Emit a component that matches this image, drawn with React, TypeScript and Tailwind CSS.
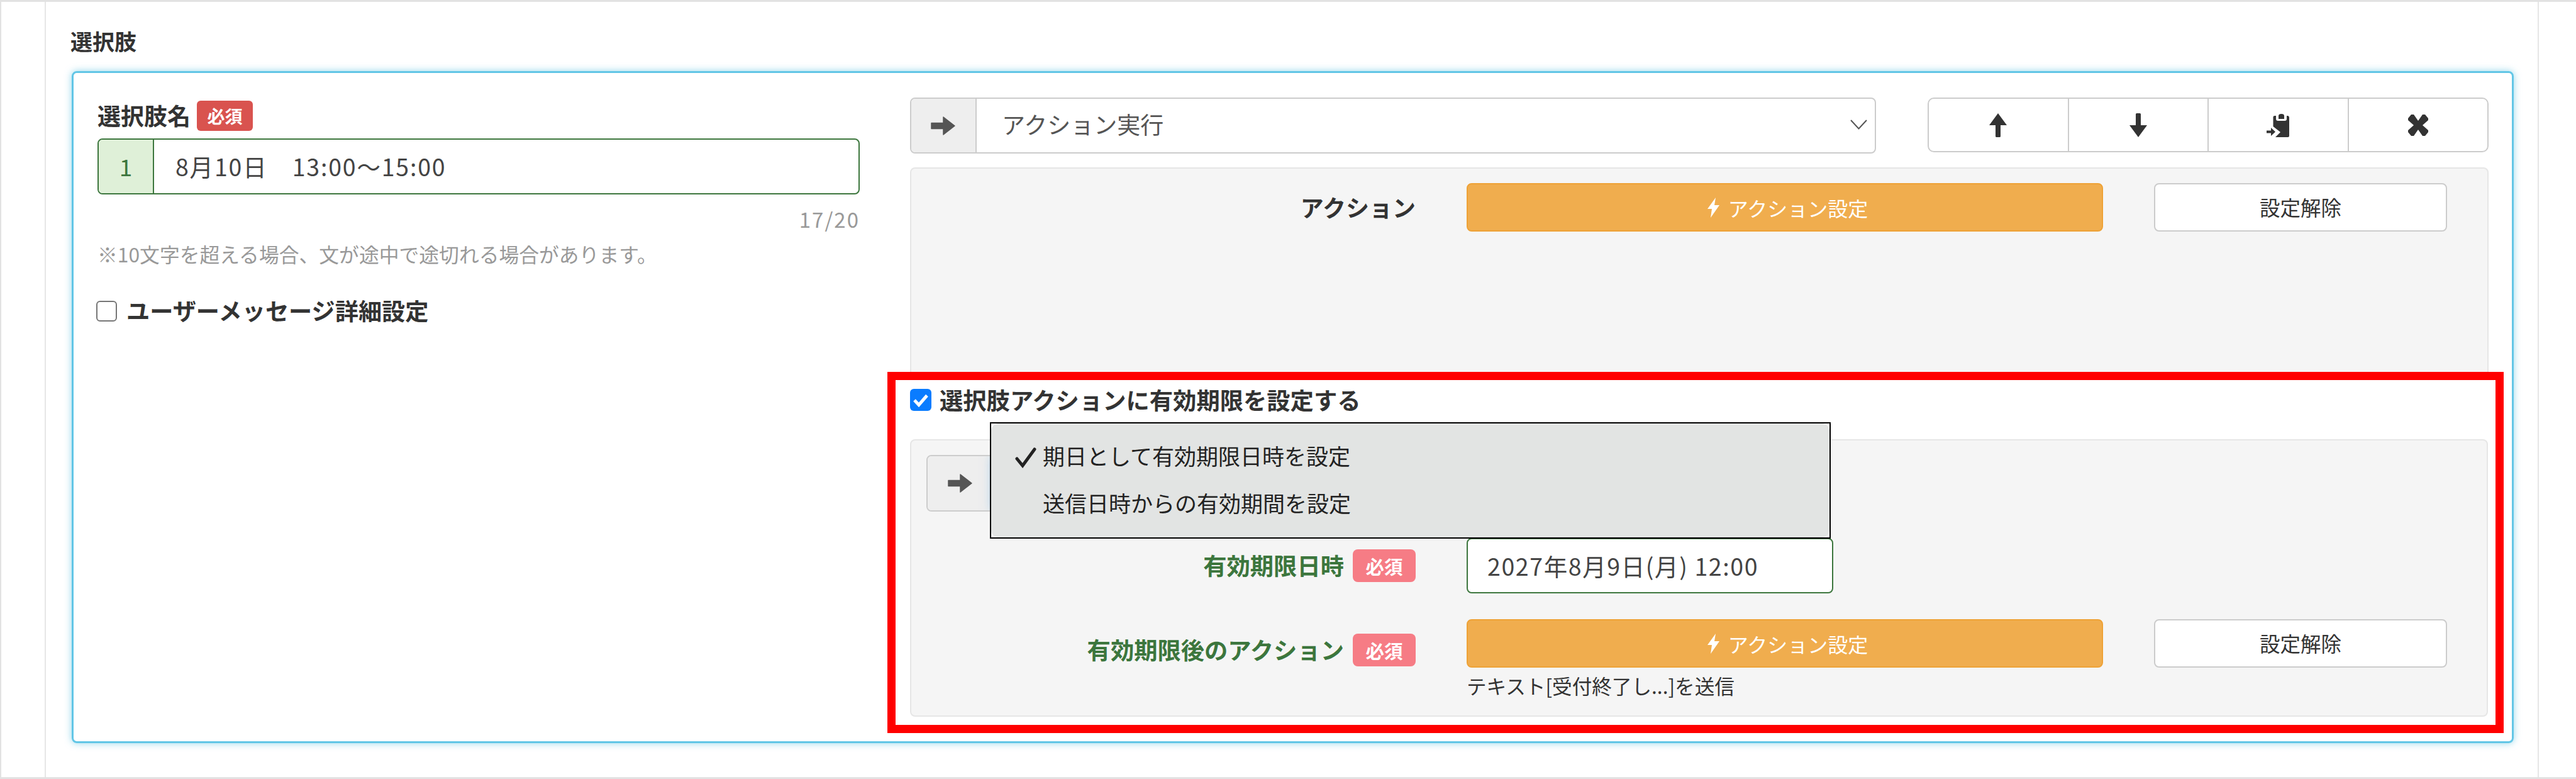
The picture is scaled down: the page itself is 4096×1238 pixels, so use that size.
const FONT = 'font-["Noto_Sans_CJK_JP","Noto_Sans",sans-serif]'

function ArrowRight() {
  return (
    <svg width="40" height="32" viewBox="0 0 40 32" aria-hidden>
      <path d="M1 11.5 H20 V2 L38 16 L20 30 V20.5 H1 Z" fill="#555" stroke="#555" strokeWidth="1.5" strokeLinejoin="round" />
    </svg>
  )
}

function ArrowUp() {
  return (
    <svg width="30" height="38" viewBox="0 0 30 38" aria-hidden>
      <path d="M15 0 L29 19 H19 V36.5 Q19 38 17.5 38 H12.5 Q11 38 11 36.5 V19 H1 Z" fill="#333" />
    </svg>
  )
}

function ArrowDown() {
  return (
    <svg width="30" height="38" viewBox="0 0 30 38" aria-hidden>
      <path d="M15 38 L29 19 H19 V1.5 Q19 0 17.5 0 H12.5 Q11 0 11 1.5 V19 H1 Z" fill="#333" />
    </svg>
  )
}

function PasteIcon() {
  return (
    <svg width="36" height="38" viewBox="0 0 36 38" aria-hidden>
      <path d="M10.5 6 Q10.5 4 13 4 H33 Q36 4 36 7 V36 Q36 38 34 38 H14 L22 30 L10.5 21 Z" fill="#333" />
      <path d="M15 3 H32 V9 Q32 12 29 12 H18 Q15 12 15 9 Z" fill="#fff" />
      <path d="M19 9 V4 Q19 1 23.5 1 Q28 1 28 4 V9 Z" fill="#333" />
      <path d="M0 27.5 H7 V23 L14 29.5 L7 36 V31.5 H0 Z" fill="#333" />
    </svg>
  )
}

function CrossIcon() {
  return (
    <svg width="32" height="34" viewBox="0 0 32 34" aria-hidden>
      <path d="M0 6 L5 0 H9 L16 10 L23 0 H27 L32 6 V9 L23 17 L32 25 V28 L27 34 H23 L16 24 L9 34 H5 L0 28 V25 L9 17 L0 9 Z" fill="#333" />
    </svg>
  )
}

function Bolt() {
  return (
    <svg width="21" height="32" viewBox="0 0 21 32" aria-hidden>
      <path d="M14 0 L1 18 H8 L6 32 L20 12 H12 Z" fill="#fff" />
    </svg>
  )
}

function Chevron() {
  return (
    <svg width="27" height="16" viewBox="0 0 27 16" fill="none" aria-hidden>
      <path d="M1 1 L13.5 14.5 L26 1" stroke="#555" strokeWidth="2" />
    </svg>
  )
}

function Required({ soft }: { soft?: boolean }) {
  return soft ? (
    <span className="flex h-[52px] w-[100px] shrink-0 items-center justify-center rounded-[8px] bg-[#f67c85] text-[29.5px] font-bold text-white">
      必須
    </span>
  ) : (
    <span className="flex h-[48px] w-[89px] shrink-0 items-center justify-center rounded-[6px] bg-[#d9534f] text-[28px] font-bold text-white">
      必須
    </span>
  )
}

function ActionButtons() {
  return (
    <div className="flex gap-[81px]">
      <button className="flex h-[77px] w-[1012px] items-center justify-center gap-[13px] rounded-[8px] border-2 border-[#eea236] bg-[#f0ad4e] pl-[8px] text-[32px] text-white">
        <Bolt />
        アクション設定
      </button>
      <button className="flex h-[77px] w-[466px] items-center justify-center rounded-[8px] border-2 border-[#ccc] bg-white text-[32.5px] text-[#333]">
        設定解除
      </button>
    </div>
  )
}

export default function App() {
  return (
    <div className={`${FONT} flex h-[1238px] w-[4096px] overflow-hidden border-y-[3px] border-l-2 border-[#e2e2e2] bg-white text-[#333]`}>
      <div className="w-[69px] shrink-0" />
      <section className="h-full w-[3966px] shrink-0 border-x-2 border-[#e6e6e6] pl-[41px]">
        <h2 className="-ml-[2px] mt-[38px] h-[48px] text-[35px] font-bold leading-[48px]">選択肢</h2>

        {/* Focused choice card */}
        <div className="mt-[24px] flex h-[1068px] w-[3883px] gap-[80px] rounded-[8px] border-[3px] border-[#62c6e6] pl-[38px] pt-[39px] shadow-[0_0_12px_rgba(91,192,222,0.65)]">
          {/* Left column */}
          <div className="w-[1212px] shrink-0">
            <div className="mt-[5px] flex h-[48px] items-center gap-[10px]">
              <label className="text-[37px] font-bold">選択肢名</label>
              <Required />
            </div>
            <div className="mt-[12px] flex h-[89px] overflow-hidden rounded-[8px] border-2 border-[#3c763d]">
              <span className="flex w-[88px] items-center justify-center border-r-2 border-[#3c763d] bg-[#dff0d8] text-[37px] text-[#3c763d]">
                1
              </span>
              <span className="flex flex-1 items-center whitespace-pre pl-[34px] text-[37.5px] tracking-[1.8px] text-[#444]">8月10日　13:00〜15:00</span>
            </div>
            <div className="mt-[22px] h-[34px] text-right text-[33px] leading-[34px] tracking-[2px] text-[#999]">17/20</div>
            <p className="mt-[20px] h-[36px] text-[31.8px] leading-[36px] text-[#999]">
              ※10文字を超える場合、文が途中で途切れる場合があります。
            </p>
            <label className="-ml-[2px] mt-[56px] flex h-[34px] items-center gap-[15px] text-[37.2px] font-bold">
              <span className="h-[33px] w-[33px] shrink-0 rounded-[6px] border-2 border-[#767676] bg-white" />
              ユーザーメッセージ詳細設定
            </label>
          </div>

          {/* Right column */}
          <div className="relative w-[2510px] shrink-0">
            <div className="flex items-start justify-between">
              <div className="flex h-[89px] w-[1536px] overflow-hidden rounded-[8px] border-2 border-[#ccc]">
                <span className="flex w-[104px] items-center justify-center border-r-2 border-[#ccc] bg-[#eee]">
                  <ArrowRight />
                </span>
                <span className="flex flex-1 items-center justify-between pb-[3px] pl-[40px] pr-[12px] text-[37px] text-[#555]">
                  アクション実行
                  <Chevron />
                </span>
              </div>
              <div className="flex h-[87px] w-[892px] divide-x-2 divide-[#ccc] overflow-hidden rounded-[10px] border-2 border-[#ccc]">
                <button className="flex flex-1 items-center justify-center"><ArrowUp /></button>
                <button className="flex flex-1 items-center justify-center"><ArrowDown /></button>
                <button className="flex flex-1 items-center justify-center"><PasteIcon /></button>
                <button className="flex flex-1 items-center justify-center"><CrossIcon /></button>
              </div>
            </div>

            <div className="mt-[22px] flex h-[338px] items-start gap-[81px] rounded-[8px] border-2 border-[#e6e6e6] bg-[#f5f5f5] pt-[23px]">
              <div className="flex h-[77px] w-[802px] items-center justify-end text-[37px] font-bold">アクション</div>
              <ActionButtons />
            </div>

            <label className="mt-[14px] flex h-[35px] items-center gap-[13px] text-[37.3px] font-bold">
              <span className="flex h-[35px] w-[34px] shrink-0 items-center justify-center rounded-[6px] bg-[#0a7cff]">
                <svg width="26" height="22" viewBox="0 0 26 22" fill="none" aria-hidden>
                  <path d="M3 11 L10 18.5 L23 3.5" stroke="#fff" strokeWidth="5" />
                </svg>
              </span>
              選択肢アクションに有効期限を設定する
            </label>

            <div className="mt-[45px] h-[441px] w-[2509px] rounded-[8px] border-2 border-[#e6e6e6] bg-[#f5f5f5] pt-[23px]">
              <div className="ml-[24px] flex h-[90px] w-[1400px] overflow-hidden rounded-[8px] border-2 border-[#ccc]">
                <span className="flex w-[104px] items-center justify-center bg-[#eee]">
                  <ArrowRight />
                </span>
                <span className="flex-1 bg-white shadow-[0_0_16px_rgba(102,175,233,0.7)]" />
              </div>
              <div className="mt-[42px] flex items-center gap-[81px]">
                <div className="flex w-[802px] items-center justify-end gap-[14px] text-[37.3px] font-bold text-[#3c763d]">
                  有効期限日時
                  <Required soft />
                </div>
                <div className="flex h-[88px] w-[583px] items-center rounded-[8px] border-2 border-[#3c763d] bg-white pl-[31px] text-[37.5px] tracking-[1.6px] text-[#444]">
                  2027年8月9日(月) 12:00
                </div>
              </div>
              <div className="mt-[41px] flex items-start gap-[81px]">
                <div className="mt-[21px] flex w-[802px] items-center justify-end gap-[14px] text-[37.3px] font-bold text-[#3c763d]">
                  有効期限後のアクション
                  <Required soft />
                </div>
                <div>
                  <ActionButtons />
                  <p className="mt-[10px] h-[36px] text-[31.6px] leading-[36px] text-[#333]">テキスト[受付終了し...]を送信</p>
                </div>
              </div>
            </div>

            {/* Open dropdown menu */}
            <div className="absolute left-[127px] top-[516px] h-[185px] w-[1337px] border-2 border-black">
              <div className="flex h-full flex-col rounded-[12px] bg-[#e2e4e3] pl-[82px] pt-[27px] text-[35px] text-[#222]">
                <div className="relative h-[48px] leading-[48px]">
                  <svg className="absolute left-[-44px] top-[11px]" width="34" height="33" viewBox="0 0 34 33" fill="none" aria-hidden>
                    <path d="M3 18 L12 29 L31 3" stroke="#222" strokeWidth="5" strokeLinecap="round" />
                  </svg>
                  期日として有効期限日時を設定
                </div>
                <div className="mt-[27px] h-[48px] leading-[48px]">送信日時からの有効期間を設定</div>
              </div>
            </div>

            {/* Red annotation frame */}
            <div className="pointer-events-none absolute left-[-36px] top-[436px] h-[574px] w-[2570px] border-[13px] border-[#ff0000]" />
          </div>
        </div>
      </section>
    </div>
  )
}
